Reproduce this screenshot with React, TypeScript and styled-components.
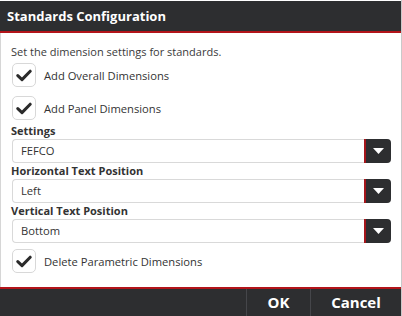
import styled, { createGlobalStyle } from "styled-components";

const GlobalStyle = createGlobalStyle`
  html, body {
    margin: 0;
    padding: 0;
    background: #ffffff;
    overflow: hidden;
  }
  body {
    font-family: "Open Sans", "Liberation Sans", sans-serif;
  }
`;

const CheckIcon = () => (
  <svg width="16" height="13" viewBox="0 0 16 13">
    <path
      d="M1.8 6.6 L6 10.6 L14.2 2.2"
      fill="none"
      stroke="#2b2b2b"
      strokeWidth="3"
      strokeLinecap="round"
      strokeLinejoin="round"
    />
  </svg>
);

const Caret = () => (
  <svg width="11" height="6" viewBox="0 0 11 6">
    <path d="M0 0 H11 L5.5 6 Z" fill="#ffffff" />
  </svg>
);

const CheckRow = ({ label, top = 3 }: { label: string; top?: number }) => (
  <CheckRowStyled $top={top}>
    <CheckBoxStyled>
      <CheckIcon />
    </CheckBoxStyled>
    <CheckLabelStyled>{label}</CheckLabelStyled>
  </CheckRowStyled>
);

const SelectField = ({ value }: { value: string }) => (
  <SelectStyled>
    <SelectValueStyled>{value}</SelectValueStyled>
    <SelectButtonStyled>
      <Caret />
    </SelectButtonStyled>
  </SelectStyled>
);

const App = () => {
  return (
    <>
      <GlobalStyle />
      <DialogStyled>
        <HeaderStyled>Standards Configuration</HeaderStyled>
        <BodyStyled>
          <IntroStyled>Set the dimension settings for standards.</IntroStyled>
          <CheckRow label="Add Overall Dimensions" />
          <CheckRow label="Add Panel Dimensions" top={6} />
          <FieldLabelStyled>Settings</FieldLabelStyled>
          <SelectField value="FEFCO" />
          <FieldLabelStyled>Horizontal Text Position</FieldLabelStyled>
          <SelectField value="Left" />
          <FieldLabelStyled>Vertical Text Position</FieldLabelStyled>
          <SelectField value="Bottom" />
          <CheckRow label="Delete Parametric Dimensions" top={6} />
        </BodyStyled>
        <FooterStyled>
          <FooterButtonStyled $width={63}>OK</FooterButtonStyled>
          <FooterButtonStyled $width={90}>Cancel</FooterButtonStyled>
        </FooterStyled>
      </DialogStyled>
    </>
  );
};

export default App;

const DialogStyled = styled.div`
  width: 401px;
  height: 316px;
  border-right: 1px solid #c9c9c9;
  display: flex;
  flex-direction: column;
  background: #ffffff;
`;

const HeaderStyled = styled.div`
  height: 30px;
  margin-top: 1px;
  background: #2d2e30;
  border-bottom: 2px solid #b3141a;
  color: #ffffff;
  font-weight: 700;
  font-size: 13px;
  line-height: 30px;
  padding-left: 7px;
`;

const BodyStyled = styled.div`
  flex: 1;
  border-left: 1px solid #d6d6d6;
  padding: 11px 10px 0 10px;
  display: flex;
  flex-direction: column;
  color: #333333;
  font-size: 11px;
`;

const IntroStyled = styled.div`
  line-height: 16px;
  color: #3a3a3a;
`;

const CheckRowStyled = styled.div<{ $top: number }>`
  display: flex;
  align-items: center;
  gap: 8px;
  margin-top: ${({ $top }) => $top}px;
  margin-bottom: 3px;
`;

const CheckBoxStyled = styled.div`
  width: 22px;
  height: 22px;
  border: 1px solid #d8d8d8;
  border-radius: 5px;
  background: #ffffff;
  display: flex;
  align-items: center;
  justify-content: center;
  margin-left: 1px;
`;

const CheckLabelStyled = styled.span`
  font-size: 11.2px;
  color: #333333;
`;

const FieldLabelStyled = styled.div`
  font-weight: 700;
  font-size: 11px;
  line-height: 16px;
  color: #333333;
`;

const SelectStyled = styled.div`
  height: 24px;
  box-sizing: border-box;
  border: 1px solid #d9d9d9;
  border-right: none;
  border-radius: 4px;
  display: flex;
  align-items: stretch;
  margin-left: 1px;
`;

const SelectValueStyled = styled.div`
  flex: 1;
  padding-left: 8px;
  font-size: 11.2px;
  line-height: 22px;
  color: #333333;
`;

const SelectButtonStyled = styled.div`
  width: 25px;
  margin: -1px 0;
  background: #2d2e30;
  border-left: 2px solid #a5161b;
  border-radius: 0 4px 4px 0;
  display: flex;
  align-items: center;
  justify-content: center;
`;

const FooterStyled = styled.div`
  height: 27px;
  background: #2d2e30;
  border-top: 2px solid #b3141a;
  display: flex;
  justify-content: flex-end;
`;

const FooterButtonStyled = styled.div<{ $width: number }>`
  width: ${({ $width }) => $width}px;
  border-left: 1px solid #45464a;
  color: #ffffff;
  font-weight: 700;
  font-size: 15px;
  display: flex;
  align-items: center;
  justify-content: center;
  padding-bottom: 2px;
`;
